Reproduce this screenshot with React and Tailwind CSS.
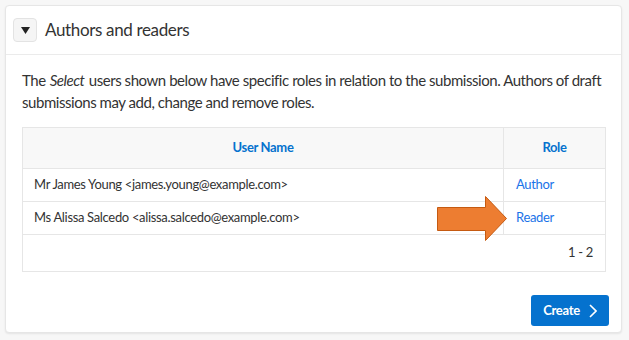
const font = { fontFamily: 'Lato, "Noto Sans", sans-serif' };

const rows = [
  { name: "Mr James Young <james.young@example.com>", role: "Author" },
  { name: "Ms Alissa Salcedo <alissa.salcedo@example.com>", role: "Reader" },
];

const Arrow = () => (
  <svg
    className="absolute left-[414px] top-[-6px]"
    width="72"
    height="46"
    viewBox="0 0 72 46"
  >
    <polygon
      points="0.5,11.5 48.5,11.5 48.5,0.5 69.5,22.5 48.5,44.5 48.5,34.5 0.5,34.5"
      fill="#ed7d31"
      stroke="#c55a11"
      strokeWidth="1"
    />
  </svg>
);

export default function App() {
  return (
    <div className="w-[629px] h-[340px] bg-[#f7f7f7] pt-[5px] pl-[5px]" style={font}>
      <div className="w-[617px] h-[328px] bg-white border border-[#e6e6e6] rounded-sm shadow-[0_1px_2px_rgba(0,0,0,0.08)] flex flex-col">
        <div className="h-[49px] flex items-center px-[7px] border-b border-[#ebebeb]">
          <div className="w-[24px] h-[24px] bg-[#f5f5f5] border border-[#e3e3e3] rounded-sm flex items-center justify-center">
            <svg width="9" height="7" viewBox="0 0 9 7">
              <polygon points="0,0 9,0 4.5,7" fill="#222" />
            </svg>
          </div>
          <span className="ml-[8px] text-[17px] tracking-[-0.35px] text-[#333]">Authors and readers</span>
        </div>
        <div className="px-[16px] pt-[14px]">
          <p className="text-[15px] leading-[22px] tracking-[-0.45px] text-[#333]">
            The<em className="ml-[4px] mr-[1px]">Select</em> users shown below have specific roles in relation to the submission. Authors of draft submissions may add, change and remove roles.
          </p>
          <div className="mt-[14px] w-[584px] border border-[#e6e6e6] text-[13px] tracking-[-0.33px]">
            <div className="flex h-[41px] bg-[#f8f8f8] border-b border-[#e6e6e6] font-bold text-[#0572ce]">
              <div className="flex-1 flex items-center justify-center">User Name</div>
              <div className="w-[102px] border-l border-[#e6e6e6] flex items-center justify-center">Role</div>
            </div>
            {rows.map((r, i) => (
              <div key={i} className="relative flex h-[33px] border-b border-[#e6e6e6]">
                <div className="flex-1 flex items-center pl-[11px] text-[#333]">{r.name}</div>
                <div className="w-[102px] border-l border-[#e6e6e6] flex items-center pl-[12px] text-[#1a73e8]">
                  {r.role}
                </div>
                {i === 1 && <Arrow />}
              </div>
            ))}
            <div className="h-[36px] flex items-center justify-end pr-[12px] text-[#333]">1 - 2</div>
          </div>
          <div className="flex justify-end mt-[23px]">
            <button className="w-[78px] h-[31px] bg-[#0572ce] rounded-[3px] text-white font-bold text-[13px] tracking-[-0.3px] flex items-center justify-center gap-[9px] mr-[-4px]">
              Create
              <svg width="8" height="14" viewBox="0 0 8 14">
                <polyline points="1,1 7,7 1,13" fill="none" stroke="white" strokeWidth="1.6" />
              </svg>
            </button>
          </div>
        </div>
      </div>
    </div>
  );
}
